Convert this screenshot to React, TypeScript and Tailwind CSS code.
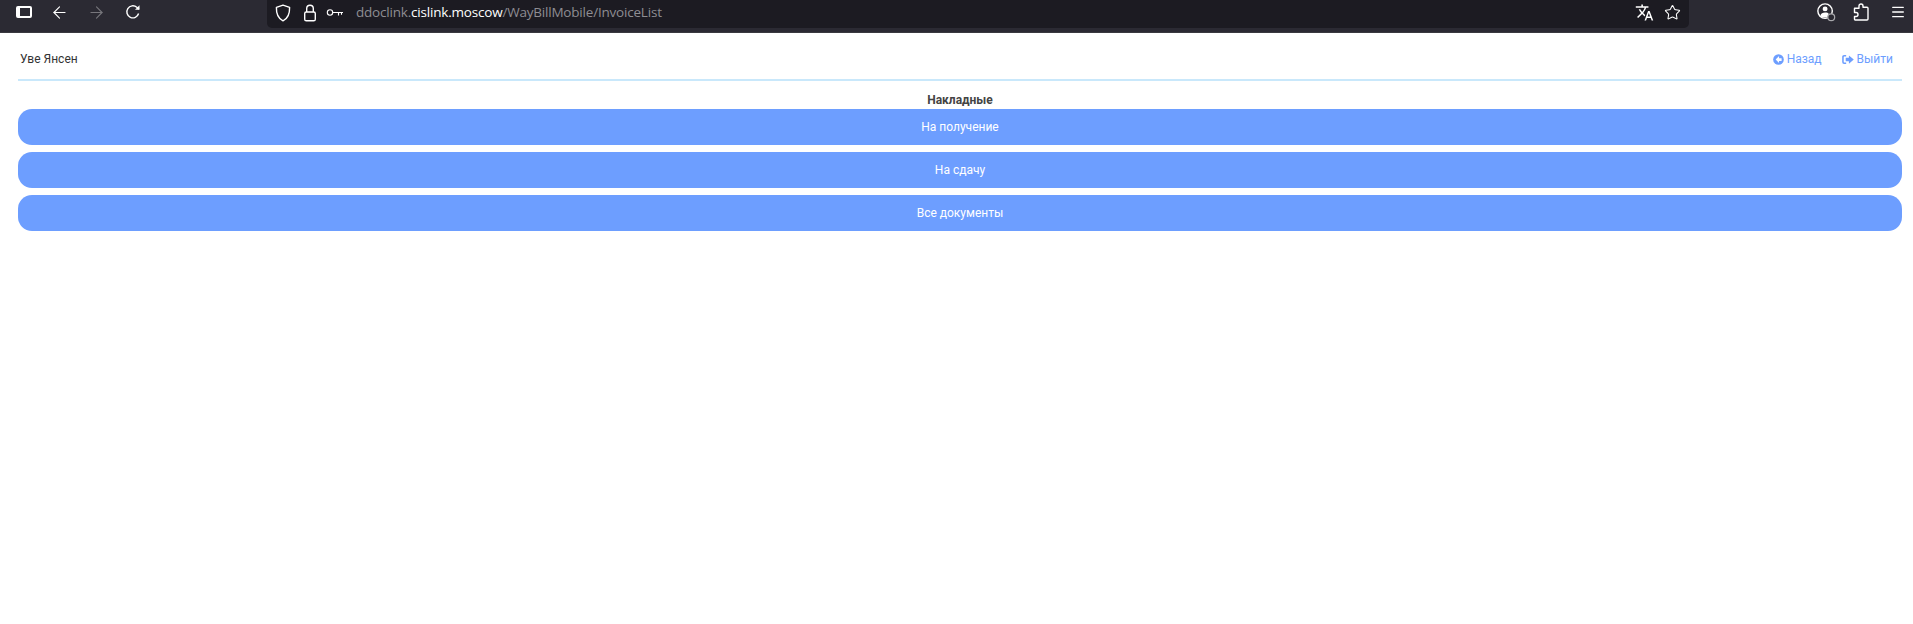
import { ArrowLeft, ArrowRight, Star, Menu } from "lucide-react";
import { MdTranslate } from "react-icons/md";

const buttons = ["На получение", "На сдачу", "Все документы"];

function ReloadIcon() {
  return (
    <svg viewBox="0 0 16 16" className="ml-[19px] size-[16px]" fill="none" stroke="#fff" strokeWidth="1.4">
      <path d="M13.6 9.500A6 6 0 1 1 11.800 3.300L14 5.200" />
      <path d="M14.500 1.200v4.500H10z" fill="#fff" stroke="none" />
    </svg>
  );
}

function ShieldIcon() {
  return (
    <svg viewBox="0 0 16 18" className="ml-[8px] h-[18px] w-[16px]" fill="none" stroke="#fff" strokeWidth="1.4">
      <path d="M8 1.200 14.600 3.400c.2 6.400-1.800 11-6.600 13.400C3.200 14.400 1.200 9.800 1.400 3.400z" strokeLinejoin="round" />
    </svg>
  );
}

function LockIcon() {
  return (
    <svg viewBox="0 0 14 18" className="ml-[12px] h-[18px] w-[14px]" fill="none" stroke="#fff" strokeWidth="1.4">
      <path d="M3.700 8V4.600a3.300 3.300 0 0 1 6.600 0V8" />
      <rect x="1.700" y="8" width="10.600" height="8.800" rx="1.600" />
    </svg>
  );
}

function KeyIcon() {
  return (
    <svg viewBox="0 0 18 10" className="ml-[9px] h-[10px] w-[18px]" fill="none" stroke="#fff" strokeWidth="1.100">
      <circle cx="4" cy="4.500" r="2.700" />
      <path d="M6.700 4.500H17M12.500 4.500V7.500M15.500 4.500V6.800" />
    </svg>
  );
}

function PuzzleIcon() {
  return (
    <svg viewBox="0 0 16 18" className="mr-[21px] h-[18px] w-[16px]" fill="none" stroke="#fff" strokeWidth="1.400" strokeLinejoin="round">
      <path d="M6 4.300V3a2 2 0 0 1 4 0v1.300h4a1 1 0 0 1 1 1V16a1 1 0 0 1-1 1H2.500a1 1 0 0 1-1-1v-2.500H3a2 2 0 0 0 0-4H1.500V5.300h4.500z" />
    </svg>
  );
}

function AccountIcon() {
  return (
    <svg viewBox="0 0 20 20" className="mr-[17px] size-[19px]">
      <circle cx="8.500" cy="8.500" r="7.600" fill="none" stroke="#fff" strokeWidth="1.500" />
      <circle cx="8.500" cy="6.200" r="2.600" fill="#fff" />
      <path d="M3.500 13.500c.5-2.500 2.600-3.400 5-3.400s3 .4 4 1.500L11 15H5z" fill="#fff" />
      <circle cx="15" cy="15" r="3.600" fill="#2b2a33" stroke="#a8a8ac" strokeWidth="1.300" />
    </svg>
  );
}

function BrowserBar() {
  return (
    <div className="flex h-[33px] items-start border-b border-[#3a3940] bg-[#2b2a33] text-white">
      <div className="flex h-[24px] w-[267px] items-center pl-[16px]">
        <div className="h-[12px] w-[16px] rounded-[2px] border-2 border-l-[4px] border-white bg-[#2b2a33]" />
        <ArrowLeft className="ml-[18px] size-[19px]" strokeWidth={1.4} />
        <ArrowRight className="ml-[18px] size-[19px] text-[#77767c]" strokeWidth={1.4} />
        <ReloadIcon />
      </div>
      <div className="flex h-[28px] w-[1422px] items-center rounded-b-[5px] bg-[#1c1b22] pb-[3px]">
        <ShieldIcon />
        <LockIcon />
        <KeyIcon />
        <span className="ml-[12px] font-['Open_Sans',sans-serif] text-[13.500px] tracking-[-0.2px] text-[#8e8d92]">
          ddoclink.<span className="text-white">cislink.moscow</span>/WayBillMobile/InvoiceList
        </span>
        <MdTranslate className="ml-auto size-[19px]" />
        <Star className="ml-[10px] mr-[8px] size-[17px]" strokeWidth={1.5} />
      </div>
      <div className="flex h-[24px] flex-1 items-center justify-end pr-[7px]">
        <AccountIcon />
        <PuzzleIcon />
        <Menu className="size-[16px]" strokeWidth={1.9} />
      </div>
    </div>
  );
}

function BackIcon() {
  return (
    <svg viewBox="0 0 12 12" className="size-[11px]">
      <circle cx="6" cy="6" r="5.800" fill="#6d9eff" />
      <path d="M6.600 2.300 2.900 6l3.700 3.700V7.500h2.800V4.500H6.600z" fill="#fff" />
    </svg>
  );
}

function ExitIcon() {
  return (
    <svg viewBox="0 0 13 12" className="h-[11px] w-[12px]">
      <path d="M4.500 2H2.200C1.500 2 1 2.500 1 3.200v5.600C1 9.500 1.500 10 2.200 10h2.300" fill="none" stroke="#6d9eff" strokeWidth="1.700" />
      <path d="M7.500 1.500 12.800 6 7.500 10.500V7.800H4V4.200h3.500z" fill="#6d9eff" />
    </svg>
  );
}

export default function App() {
  return (
    <div className="h-[624px] overflow-hidden bg-white font-['Roboto',sans-serif] text-[12px] text-[#333]">
      <BrowserBar />
      <div className="pl-[18px]">
        <div className="flex h-[48px] w-[1884px] items-center justify-between border-b-2 border-[#c9e8fb] pl-[2px] pt-[6px]">
          <span>Уве Янсен</span>
          <div className="flex items-center gap-[20px] pr-[9px] text-[#6d9eff]">
            <span className="flex items-center gap-[3px]"><BackIcon />Назад</span>
            <span className="flex items-center gap-[3px]"><ExitIcon />Выйти</span>
          </div>
        </div>
        <div className="mt-[10px] h-[18px] w-[1884px] text-center font-bold leading-[18px] text-[#444]">Накладные</div>
        <div className="flex w-[1884px] flex-col gap-[7px]">
          {buttons.map((label) => (
            <div key={label} className="flex h-[36px] items-center justify-center rounded-[14px] bg-[#6d9eff] text-white">
              {label}
            </div>
          ))}
        </div>
      </div>
    </div>
  );
}
